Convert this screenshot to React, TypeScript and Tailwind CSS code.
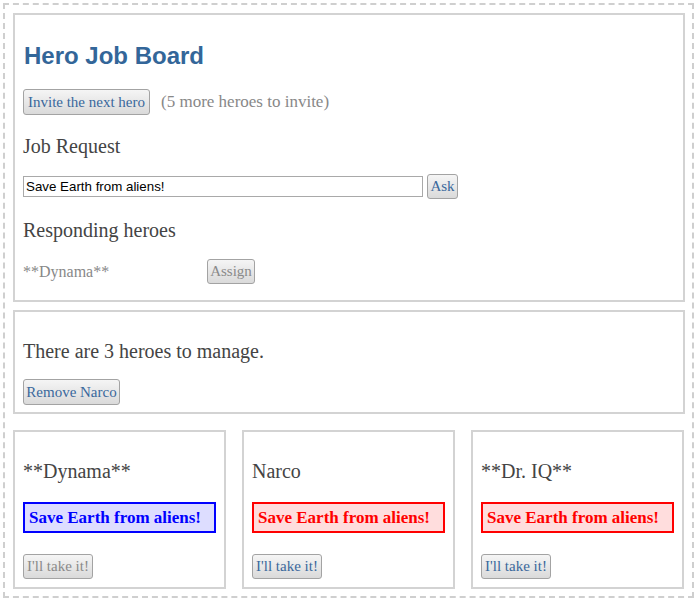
import React from "react";

const serif = "font-['Liberation_Serif',serif]";

function Btn({ label, w, h, disabled }: { label: string; w: string; h: string; disabled?: boolean }) {
  return (
    <button
      className={`${serif} ${w} ${h} shrink-0 flex items-center justify-center rounded-[3px] border border-[#a3a3a3] bg-gradient-to-b from-[#f5f5f5] to-[#dadada] text-[15px] leading-none ${disabled ? "text-[#8a8a8a]" : "text-[#3a689c]"}`}
    >
      {label}
    </button>
  );
}

function Card({ name, blue }: { name: string; blue?: boolean }) {
  return (
    <div className="w-[213px] h-[159px] border-2 border-[#d3d3d3] px-2">
      <div className={`${serif} mt-[27px] text-[20px] leading-[24px] text-[#444]`}>{name}</div>
      <div
        className={`${serif} mt-[19px] h-[31px] border-2 flex items-center pl-[4px] text-[17px] font-bold leading-none ${
          blue ? "border-[#0000ff] bg-[#ddddff] text-[#0000ff]" : "border-[#ff0000] bg-[#ffdddd] text-[#ff0000]"
        }`}
      >
        Save Earth from aliens!
      </div>
      <div className="mt-[21px] flex">
        <Btn label="I'll take it!" w="w-[70px]" h="h-[25px]" disabled={blue} />
      </div>
    </div>
  );
}

export default function App() {
  return (
    <div className="bg-white w-[698px] h-[602px] pt-[3px] pl-[3px]">
      <div className="w-[691px] border-2 border-dashed border-[#cfcfcf] pt-2 pl-2 pr-[7px] pb-[7px]">
        {/* Panel 1 */}
        <div className="w-[672px] border-2 border-[#d3d3d3] px-2 pb-[16px]">
          <h2 className="mt-[27px] font-['Liberation_Sans',Arial,sans-serif] font-bold text-[24px] leading-[28px] text-[#336699] pl-[1px]">
            Hero Job Board
          </h2>
          <div className="mt-[19px] flex items-center h-[26px]">
            <Btn label="Invite the next hero" w="w-[127px]" h="h-[26px]" />
            <span className={`${serif} ml-[11px] text-[17px] text-[#888]`}>(5 more heroes to invite)</span>
          </div>
          <div className={`${serif} mt-[19px] text-[20px] leading-[24px] text-[#444]`}>Job Request</div>
          <div className="mt-[16px] flex items-center h-[25px] gap-[4px]">
            <input
              readOnly
              value="Save Earth from aliens!"
              className="w-[400px] h-[21px] border border-[#a9a9a9] px-[2px] font-['Liberation_Sans',Arial,sans-serif] text-[13.33px] text-black outline-none"
            />
            <Btn label="Ask" w="w-[31px]" h="h-[25px]" />
          </div>
          <div className={`${serif} mt-[19px] text-[20px] leading-[24px] text-[#444]`}>Responding heroes</div>
          <div className="mt-[17px] flex items-center h-[25px]">
            <span className={`${serif} w-[184px] text-[16px] text-[#888]`}>**Dynama**</span>
            <Btn label="Assign" w="w-[48px]" h="h-[25px]" disabled />
          </div>
        </div>

        {/* Panel 2 */}
        <div className="mt-2 w-[672px] border-2 border-[#d3d3d3] px-2 pb-[7px]">
          <div className={`${serif} mt-[27px] text-[20px] leading-[24px] text-[#444]`}>There are 3 heroes to manage.</div>
          <div className="mt-[16px] flex">
            <Btn label="Remove Narco" w="w-[97px]" h="h-[26px]" />
          </div>
        </div>

        {/* Cards */}
        <div className="mt-4 flex gap-4">
          <Card name="**Dynama**" blue />
          <Card name="Narco" />
          <Card name="**Dr. IQ**" />
        </div>
      </div>
    </div>
  );
}
